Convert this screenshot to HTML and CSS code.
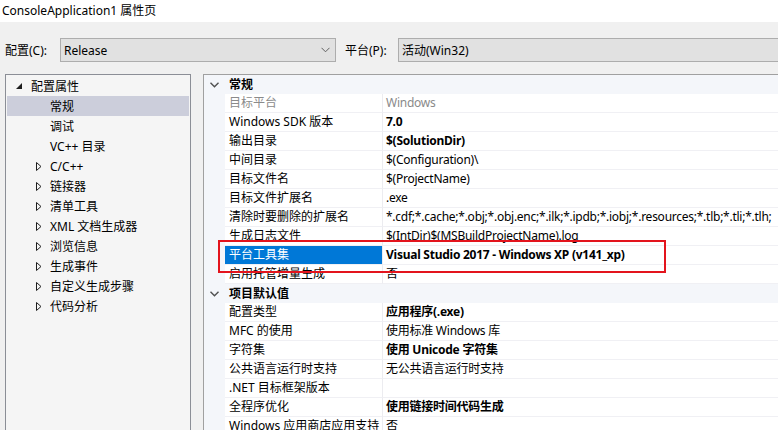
FILE: index.html
```html
<!DOCTYPE html>
<html lang="zh-CN">
<head>
<meta charset="utf-8">
<title>ConsoleApplication1 属性页</title>
<link rel="stylesheet" href="styles.css">
</head>
<body>
<div class="window">
  <div class="titlebar">ConsoleApplication1 属性页</div>
  <div class="configbar">
    <span class="cfg-label">配置(C):</span>
    <div class="combo combo-config"><span>Release</span>
      <svg class="chev" width="9" height="6" viewBox="0 0 9 6"><path d="M0.5 0.8 L4.5 4.8 L8.5 0.8" fill="none" stroke="#606060" stroke-width="1"/></svg>
    </div>
    <span class="plat-label">平台(P):</span>
    <div class="combo combo-plat"><span>活动(Win32)</span></div>
  </div>
  <div class="main">
    <div class="tree">
      <div class="trow lvl0"><span class="arr"><svg width="6" height="6" viewBox="0 0 6 6"><path d="M6 0 L6 6 L0 6 Z" fill="#1e1e1e"/></svg></span><span>配置属性</span></div>
      <div class="trow lvl1 sel"><span class="arr"></span><span>常规</span></div>
      <div class="trow lvl1"><span class="arr"></span><span>调试</span></div>
      <div class="trow lvl1"><span class="arr"></span><span>VC++ 目录</span></div>
      <div class="trow lvl1"><span class="arr"><svg width="6" height="9" viewBox="0 0 6 9"><path d="M0.5 0.5 L5 4.5 L0.5 8.5 Z" fill="none" stroke="#1e1e1e" stroke-width="1"/></svg></span><span>C/C++</span></div>
      <div class="trow lvl1"><span class="arr"><svg width="6" height="9" viewBox="0 0 6 9"><path d="M0.5 0.5 L5 4.5 L0.5 8.5 Z" fill="none" stroke="#1e1e1e" stroke-width="1"/></svg></span><span>链接器</span></div>
      <div class="trow lvl1"><span class="arr"><svg width="6" height="9" viewBox="0 0 6 9"><path d="M0.5 0.5 L5 4.5 L0.5 8.5 Z" fill="none" stroke="#1e1e1e" stroke-width="1"/></svg></span><span>清单工具</span></div>
      <div class="trow lvl1"><span class="arr"><svg width="6" height="9" viewBox="0 0 6 9"><path d="M0.5 0.5 L5 4.5 L0.5 8.5 Z" fill="none" stroke="#1e1e1e" stroke-width="1"/></svg></span><span>XML 文档生成器</span></div>
      <div class="trow lvl1"><span class="arr"><svg width="6" height="9" viewBox="0 0 6 9"><path d="M0.5 0.5 L5 4.5 L0.5 8.5 Z" fill="none" stroke="#1e1e1e" stroke-width="1"/></svg></span><span>浏览信息</span></div>
      <div class="trow lvl1"><span class="arr"><svg width="6" height="9" viewBox="0 0 6 9"><path d="M0.5 0.5 L5 4.5 L0.5 8.5 Z" fill="none" stroke="#1e1e1e" stroke-width="1"/></svg></span><span>生成事件</span></div>
      <div class="trow lvl1"><span class="arr"><svg width="6" height="9" viewBox="0 0 6 9"><path d="M0.5 0.5 L5 4.5 L0.5 8.5 Z" fill="none" stroke="#1e1e1e" stroke-width="1"/></svg></span><span>自定义生成步骤</span></div>
      <div class="trow lvl1"><span class="arr"><svg width="6" height="9" viewBox="0 0 6 9"><path d="M0.5 0.5 L5 4.5 L0.5 8.5 Z" fill="none" stroke="#1e1e1e" stroke-width="1"/></svg></span><span>代码分析</span></div>
    </div>
    <div class="grid">
      <div class="grow cat"><span class="gut"><svg width="9" height="6" viewBox="0 0 9 6"><path d="M0.5 0.8 L4.5 4.8 L8.5 0.8" fill="none" stroke="#505050" stroke-width="1.4"/></svg></span><span class="cattext">常规</span></div>
      <div class="grow"><span class="gut"></span><span class="name dis">目标平台</span><span class="val dis">Windows</span></div>
      <div class="grow"><span class="gut"></span><span class="name">Windows SDK 版本</span><span class="val b">7.0</span></div>
      <div class="grow"><span class="gut"></span><span class="name">输出目录</span><span class="val b">$(SolutionDir)</span></div>
      <div class="grow"><span class="gut"></span><span class="name">中间目录</span><span class="val">$(Configuration)\</span></div>
      <div class="grow"><span class="gut"></span><span class="name">目标文件名</span><span class="val">$(ProjectName)</span></div>
      <div class="grow"><span class="gut"></span><span class="name">目标文件扩展名</span><span class="val">.exe</span></div>
      <div class="grow"><span class="gut"></span><span class="name">清除时要删除的扩展名</span><span class="val">*.cdf;*.cache;*.obj;*.obj.enc;*.ilk;*.ipdb;*.iobj;*.resources;*.tlb;*.tli;*.tlh;</span></div>
      <div class="grow"><span class="gut"></span><span class="name">生成日志文件</span><span class="val">$(IntDir)$(MSBuildProjectName).log</span></div>
      <div class="grow"><span class="gut"></span><span class="name selname">平台工具集</span><span class="val b">Visual Studio 2017 - Windows XP (v141_xp)</span></div>
      <div class="grow"><span class="gut"></span><span class="name">启用托管增量生成</span><span class="val">否</span></div>
      <div class="grow cat"><span class="gut"><svg width="9" height="6" viewBox="0 0 9 6"><path d="M0.5 0.8 L4.5 4.8 L8.5 0.8" fill="none" stroke="#505050" stroke-width="1.4"/></svg></span><span class="cattext">项目默认值</span></div>
      <div class="grow"><span class="gut"></span><span class="name">配置类型</span><span class="val b">应用程序(.exe)</span></div>
      <div class="grow"><span class="gut"></span><span class="name">MFC 的使用</span><span class="val">使用标准 Windows 库</span></div>
      <div class="grow"><span class="gut"></span><span class="name">字符集</span><span class="val b">使用 Unicode 字符集</span></div>
      <div class="grow"><span class="gut"></span><span class="name">公共语言运行时支持</span><span class="val">无公共语言运行时支持</span></div>
      <div class="grow"><span class="gut"></span><span class="name">.NET 目标框架版本</span><span class="val"></span></div>
      <div class="grow"><span class="gut"></span><span class="name">全程序优化</span><span class="val b">使用链接时间代码生成</span></div>
      <div class="grow"><span class="gut"></span><span class="name">Windows 应用商店应用支持</span><span class="val">否</span></div>
    </div>
    <div class="highlight"></div>
  </div>
</div>
</body>
</html>
```

FILE: styles.css
```css
html, body {
  margin: 0;
  padding: 0;
}
body {
  width: 778px;
  height: 430px;
  overflow: hidden;
  background: #f0f0f0;
  font-family: "Noto Sans", "Noto Sans CJK SC", sans-serif;
  font-size: 12px;
  color: #000;
}
.window {
  display: flex;
  flex-direction: column;
  height: 430px;
}
.titlebar {
  height: 22px;
  line-height: 22px;
  background: #fff;
  padding-left: 2px;
  white-space: nowrap;
}
.configbar {
  display: flex;
  align-items: center;
  height: 52px;
  padding-left: 5px;
  padding-top: 4px;
  box-sizing: border-box;
  white-space: nowrap;
}
.cfg-label {
  width: 55px;
}
.combo {
  height: 24px;
  box-sizing: border-box;
  border: 1px solid #adadad;
  background: #e1e1e1;
  display: flex;
  align-items: center;
  padding-left: 3px;
}
.combo-config {
  width: 276px;
  justify-content: space-between;
  padding-right: 5px;
}
.chev {
  display: block;
}
.plat-label {
  margin-left: 9px;
  width: 53px;
}
.combo-plat {
  flex: 1;
  border-right: none;
}
.main {
  position: relative;
  flex: 1;
  display: flex;
  padding-left: 5px;
  min-height: 0;
}
.tree {
  width: 186px;
  box-sizing: border-box;
  border: 1px solid #8b8e96;
  border-bottom: none;
  background: #f5f5f5;
  padding: 1px;
  white-space: nowrap;
}
.trow {
  display: flex;
  align-items: center;
  height: 20px;
}
.trow.sel {
  background: #cccedb;
}
.lvl0 {
  padding-left: 9px;
}
.lvl0 .arr {
  width: 15px;
  padding-bottom: 1px;
}
.lvl1 {
  padding-left: 29px;
}
.lvl1 .arr {
  width: 14px;
  padding-top: 1px;
}
.arr svg {
  display: block;
}
.grid {
  margin-left: 12px;
  flex: 1;
  border-top: 1px solid #a0a0a0;
  border-left: 1px solid #a0a0a0;
  background: #fff;
  overflow: hidden;
  white-space: nowrap;
}
.grow {
  display: flex;
  height: 19px;
}
.gut {
  width: 21px;
  flex: none;
  background: #f4f6fa;
  display: flex;
  align-items: center;
  padding-left: 6px;
  box-sizing: border-box;
}
.name {
  width: 158px;
  flex: none;
  box-sizing: border-box;
  border-right: 1px solid #ececf0;
  border-bottom: 1px solid #f0f0f4;
  padding-left: 4px;
  line-height: 18px;
  overflow: hidden;
}
.val {
  flex: 1;
  border-bottom: 1px solid #f0f0f4;
  padding-left: 3px;
  line-height: 18px;
  overflow: hidden;
  letter-spacing: -0.25px;
}
.b {
  font-weight: bold;
}
.dis {
  color: #8a8a8a;
}
.selname {
  background: #0078d7;
  color: #fff;
}
.cat {
  background: #f4f6fa;
}
.cattext {
  font-weight: bold;
  padding-left: 4px;
  line-height: 19px;
}
.highlight {
  position: absolute;
  left: 218px;
  top: 166px;
  width: 448px;
  height: 33px;
  box-sizing: border-box;
  border: 2px solid #e3141d;
  pointer-events: none;
}
```
